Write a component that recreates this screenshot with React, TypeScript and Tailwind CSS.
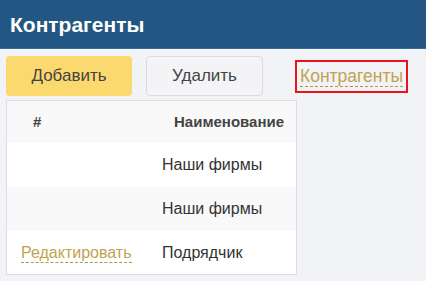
export default function App() {
  return (
    <div className="w-[426px] h-[281px] bg-[#f2f3f7] overflow-hidden" style={{ fontFamily: '"Liberation Sans", Arial, sans-serif' }}>
      <div className="h-[49px] bg-[#245683] border-b border-[#3b6a95] flex items-center pl-[10px] pt-[1px]">
        <span className="text-white font-bold text-[21px]">Контрагенты</span>
      </div>
      <div className="flex items-start px-[6px] pt-[7px]">
        <button className="w-[126px] h-[40px] rounded-[4px] bg-[#fcd96f] text-[#444] text-[17px]">Добавить</button>
        <button className="ml-[14px] w-[117px] h-[40px] rounded-[4px] bg-[#f4f4f6] border border-[#dcdcdf] text-[#444] text-[17px]">Удалить</button>
        <div className="ml-[32px] mt-[4px] w-[113px] h-[33px] border-2 border-[#e8161c] flex items-center justify-center">
          <span className="text-[#c2a24f] text-[17.5px] border-b border-dashed border-[#a89a4c] leading-[19px] mt-[1px]">Контрагенты</span>
        </div>
      </div>
      <div className="ml-[6px] mt-[4px] w-[291px] bg-white border border-[#dcdde0] text-[16px] text-[#333]">
        <div className="flex h-[42px] items-center bg-[#f9f9f9] font-bold text-[15px] text-[#444]">
          <div className="w-[144px] pl-[26px]">#</div>
          <div className="flex-1 pl-[23px]">Наименование</div>
        </div>
        <div className="flex h-[44px] items-center">
          <div className="w-[144px]"></div>
          <div className="flex-1 pl-[11px]">Наши фирмы</div>
        </div>
        <div className="flex h-[44px] items-center bg-[#f9f9f9]">
          <div className="w-[144px]"></div>
          <div className="flex-1 pl-[11px]">Наши фирмы</div>
        </div>
        <div className="flex h-[43px] items-center">
          <div className="w-[144px] pl-[14px]">
            <span className="text-[#c2a24f] border-b border-dashed border-[#a89a4c] leading-[18px] inline-block">Редактировать</span>
          </div>
          <div className="flex-1 pl-[11px]">Подрядчик</div>
        </div>
      </div>
    </div>
  );
}
